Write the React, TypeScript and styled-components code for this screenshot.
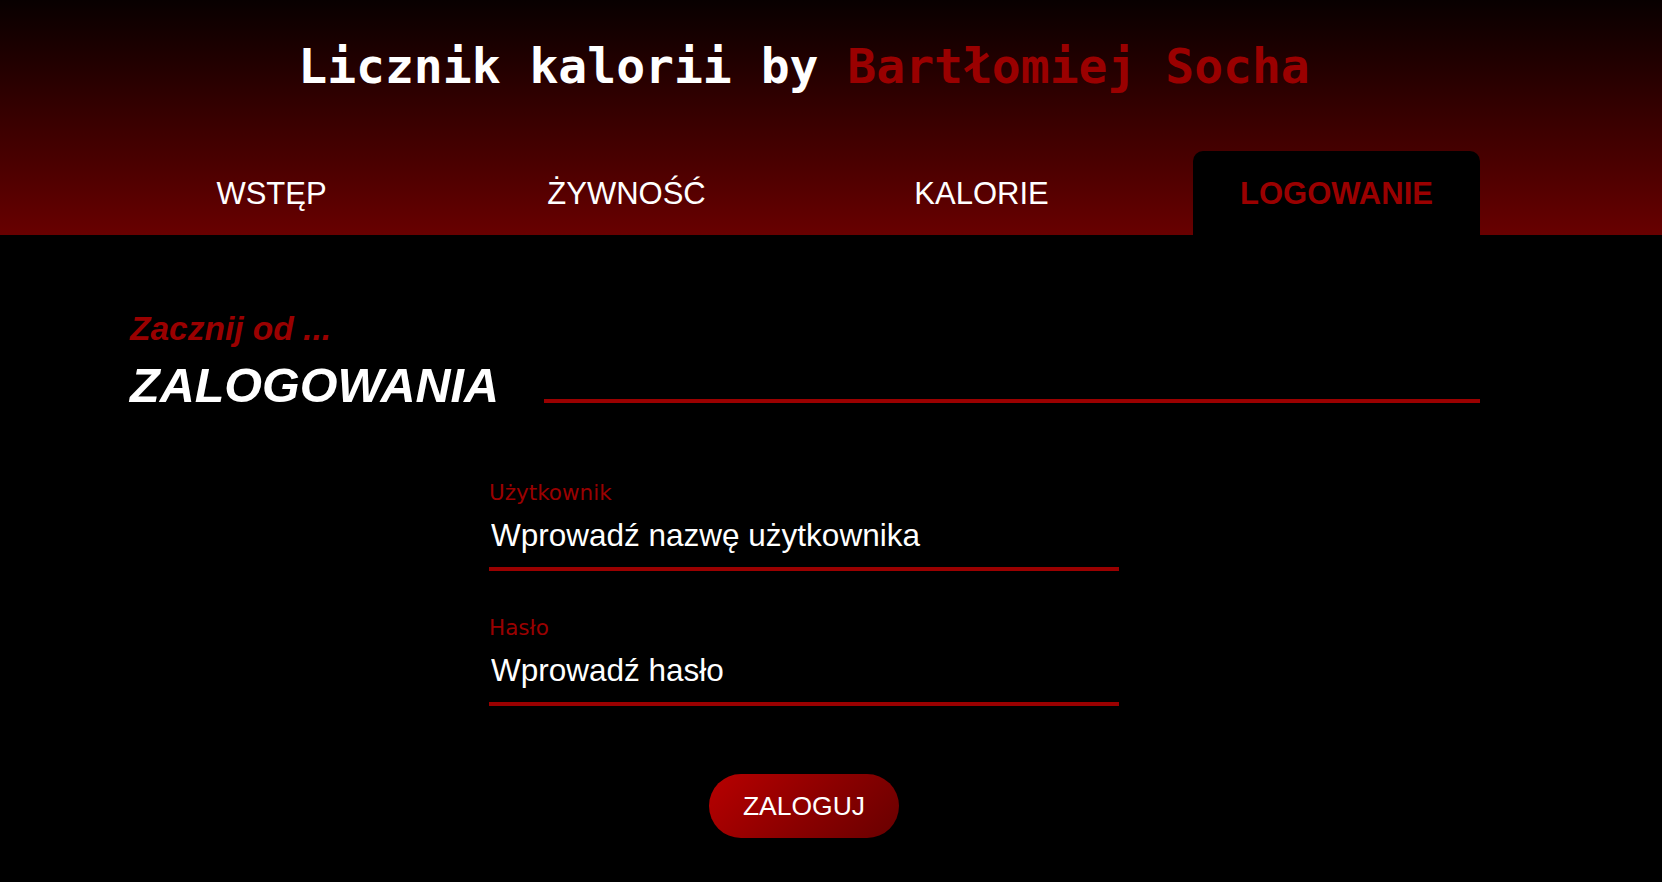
import React from "react";
import styled, { createGlobalStyle } from "styled-components";

const RED = "#9a0000";

const GlobalStyle = createGlobalStyle`
  html, body {
    margin: 0;
    padding: 0;
    background: #000;
    min-height: 100%;
  }
  body {
    font-family: "Liberation Sans", Arial, sans-serif;
    color: #fff;
  }
  * { box-sizing: border-box; }
`;

const Page = styled.div`
  min-height: 882px;
  background: #000;
`;

const Header = styled.header`
  background: linear-gradient(to bottom, #080000 0%, #680000 100%);
  padding: 38px 182px 0 128px;
`;

const Title = styled.h1`
  margin: 0;
  text-align: center;
  font-family: "DejaVu Sans Mono", "Liberation Mono", monospace;
  font-weight: bold;
  font-size: 48px;
  line-height: 56px;
  color: #fff;
  white-space: pre;
`;

const Accent = styled.span`
  color: ${RED};
`;

const Nav = styled.nav`
  margin-top: 57px;
  display: grid;
  grid-template-columns: repeat(4, 1fr);
  column-gap: 68px;
`;

const Tab = styled.a<{ $active?: boolean }>`
  height: 84px;
  display: flex;
  align-items: center;
  justify-content: center;
  padding-top: 1px;
  font-family: "Liberation Sans", Arial, sans-serif;
  font-size: 31px;
  font-weight: ${(p) => (p.$active ? "bold" : "normal")};
  color: ${(p) => (p.$active ? RED : "#fff")};
  background: ${(p) => (p.$active ? "#000" : "transparent")};
  border-radius: 10px 10px 0 0;
  text-decoration: none;
  cursor: pointer;
`;

const Main = styled.main`
  padding: 75px 182px 40px 128px;
`;

const Kicker = styled.h3`
  margin: 0 0 10px 0;
  font-size: 33.5px;
  line-height: 38px;
  font-style: italic;
  font-weight: bold;
  color: ${RED};
  padding-left: 2px;
`;

const HeadingRow = styled.div`
  display: flex;
  align-items: flex-end;
`;

const Heading = styled.h2`
  margin: 0;
  font-size: 48.5px;
  line-height: 55px;
  font-style: italic;
  font-weight: bold;
  color: #fff;
  padding-left: 2px;
`;

const Rule = styled.div`
  flex: 1;
  height: 4px;
  margin: 0 0 10px 45px;
  background: ${RED};
`;

const Form = styled.form`
  width: 630px;
  margin: 66px auto 0;
  display: flex;
  flex-direction: column;
`;

const Field = styled.label`
  display: block;
  & + & {
    margin-top: 43px;
  }
`;

const Label = styled.span`
  display: block;
  font-family: "Comic Sans MS", "DejaVu Sans", cursive;
  font-size: 21.5px;
  line-height: 24px;
  color: ${RED};
  padding-top: 2px;
  margin-bottom: 12px;
`;

const Input = styled.input`
  display: block;
  box-sizing: content-box;
  height: 36px;
  padding: 0 0 14px 2px;
  margin: 0;
  border: none;
  border-bottom: 4px solid ${RED};
  background: transparent;
  color: #fff;
  font-family: "Liberation Sans", Arial, sans-serif;
  font-size: 31.5px;
  outline: none;
  width: calc(100% - 2px);
  &::placeholder {
    color: #fff;
    opacity: 1;
  }
`;

const Button = styled.button`
  align-self: center;
  margin-top: 68px;
  height: 64px;
  padding: 0 34px;
  border: none;
  border-radius: 32px;
  background: linear-gradient(135deg, #b80000 0%, #8a0000 55%, #680000 100%);
  color: #fff;
  font-family: "Liberation Sans", Arial, sans-serif;
  font-size: 26.5px;
  cursor: pointer;
`;

const tabs = ["WSTĘP", "ŻYWNOŚĆ", "KALORIE", "LOGOWANIE"];

export default function App() {
  return (
    <Page>
      <GlobalStyle />
      <Header>
        <Title>
          Licznik kalorii by <Accent>Bartłomiej Socha</Accent>
        </Title>
        <Nav>
          {tabs.map((t) => (
            <Tab key={t} $active={t === "LOGOWANIE"}>
              {t}
            </Tab>
          ))}
        </Nav>
      </Header>
      <Main>
        <Kicker>Zacznij od ...</Kicker>
        <HeadingRow>
          <Heading>ZALOGOWANIA</Heading>
          <Rule />
        </HeadingRow>
        <Form onSubmit={(e) => e.preventDefault()}>
          <Field>
            <Label>Użytkownik</Label>
            <Input type="text" placeholder="Wprowadź nazwę użytkownika" />
          </Field>
          <Field>
            <Label>Hasło</Label>
            <Input type="password" placeholder="Wprowadź hasło" />
          </Field>
          <Button type="submit">ZALOGUJ</Button>
        </Form>
      </Main>
    </Page>
  );
}
